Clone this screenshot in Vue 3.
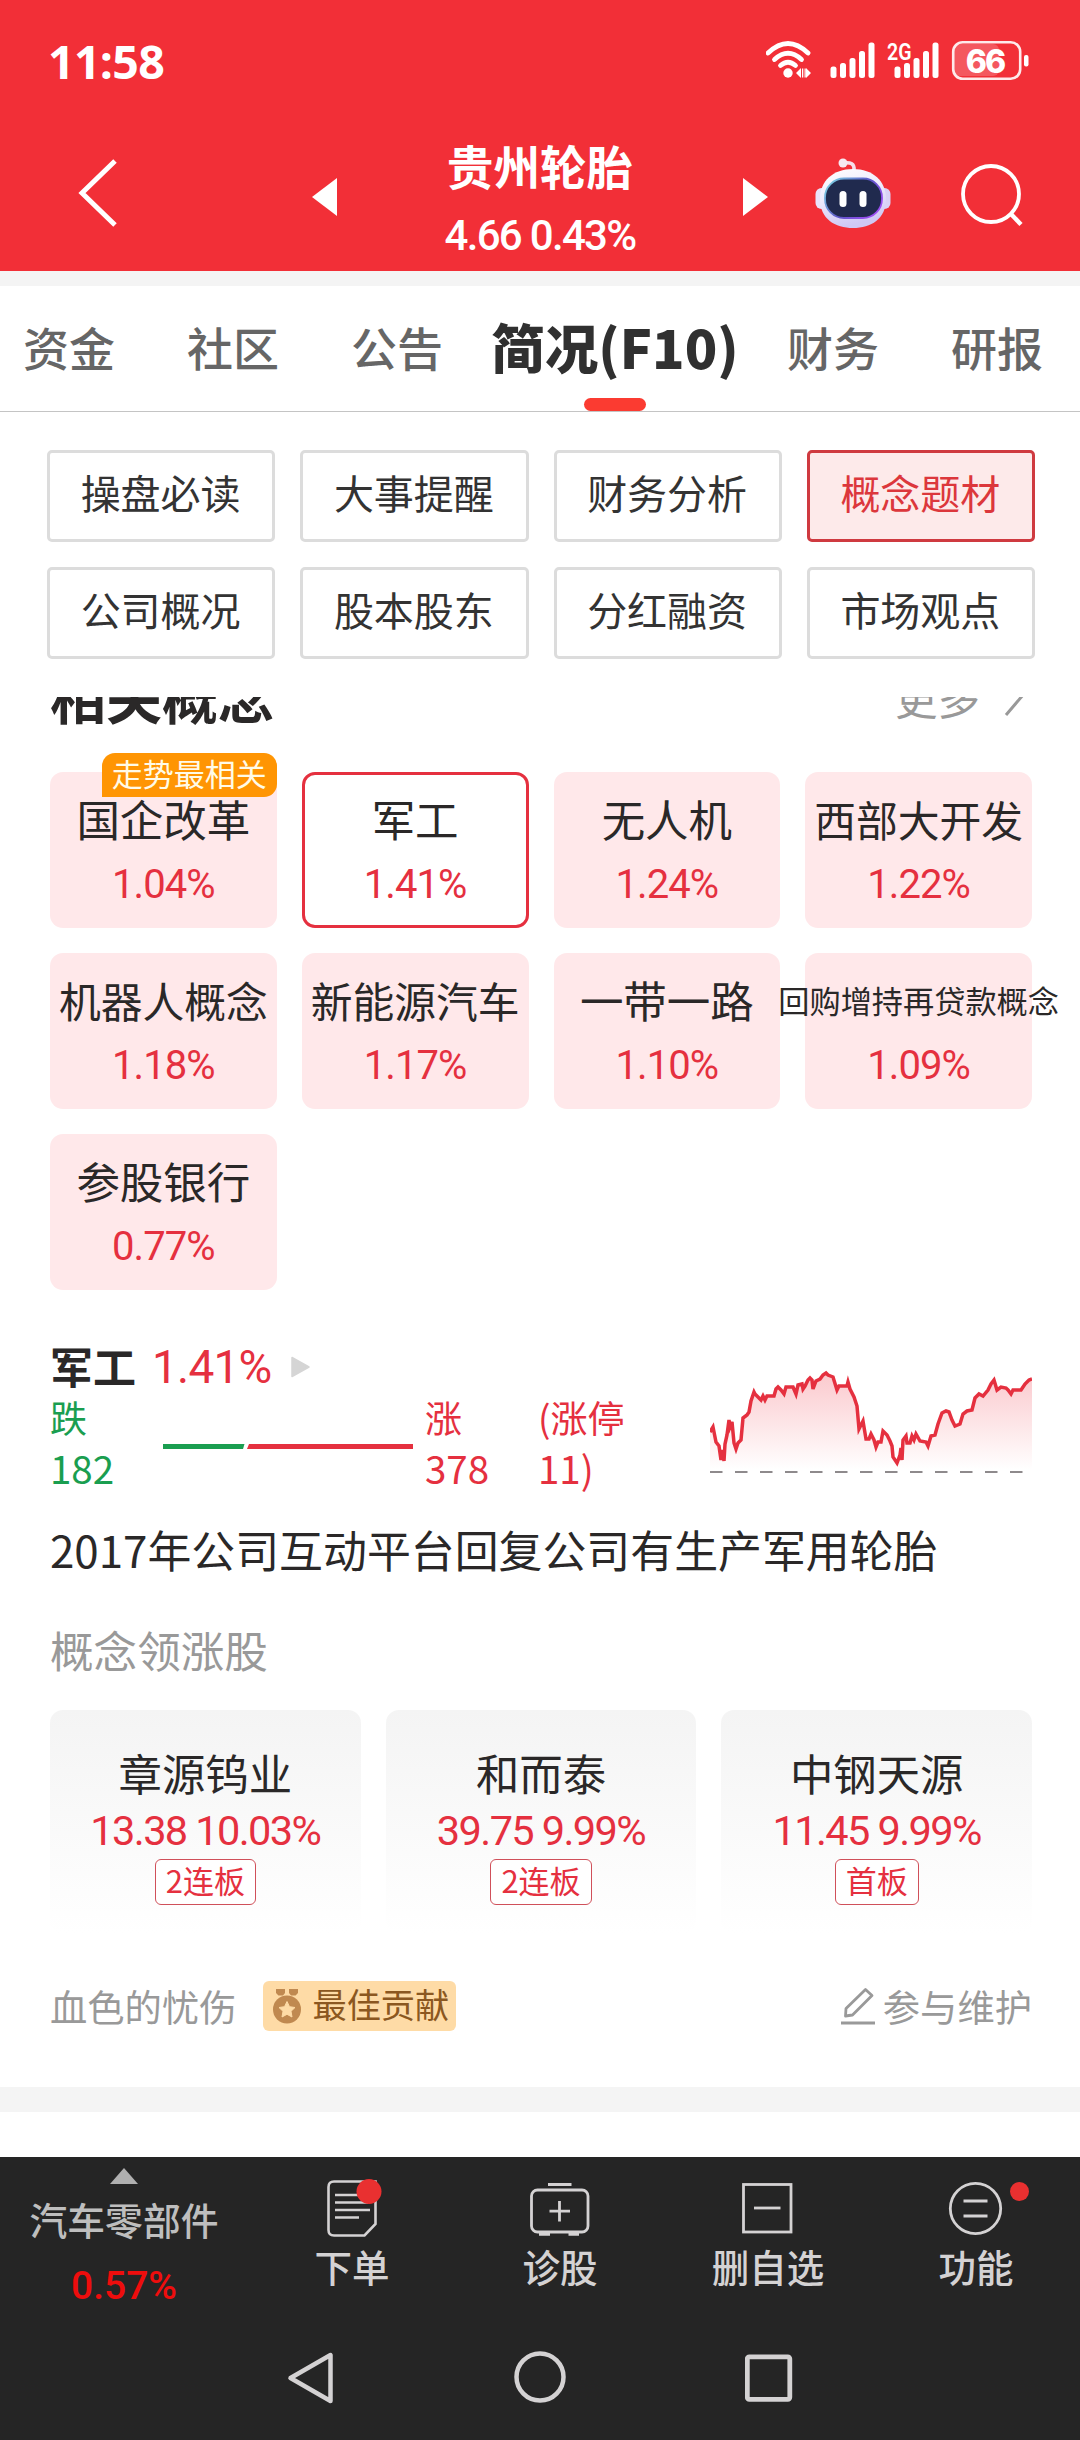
<template>
  <div class="screen">
    <header class="top">
      <div class="status-bar">
        <span class="clock">11:58</span>
        <svg class="status-icons" width="264" height="42" viewBox="0 0 264 42">
          <g fill="none" stroke="#fff" stroke-width="4.8" stroke-linecap="round">
            <path d="M2 13 Q22 -6 42 13" />
            <path d="M8.500 19.500 Q22 7 35.500 19.500" />
            <path d="M14.500 25.500 Q22 19 29.500 25.500" />
          </g>
          <circle cx="22" cy="33" r="4.700" fill="#fff" />
          <path d="M30 33l5-5v10zM45 33l-5-5v10zM36 28.500h1.300v9H36zM38.500 28.500h1.300v9h-1.300z" fill="#fff" />
          <g fill="#fff">
            <rect v-for="bar in signalBars" :key="'a' + bar.x" :x="bar.x" :y="38 - bar.h" width="6" :height="bar.h" rx="2.500" />
            <rect v-for="bar in signalBars" :key="'b' + bar.x" :x="bar.x + 64" :y="38 - bar.h" width="6" :height="bar.h" rx="2.500" />
          </g>
          <text class="net-label" x="121" y="19.500" textLength="24.500" lengthAdjust="spacingAndGlyphs">2G</text>
          <rect x="188" y="4" width="45" height="32" rx="6" fill="#fff" opacity="0.2" />
          <rect x="187.200" y="2.200" width="67" height="36.600" rx="9.500" fill="none" stroke="#fff" stroke-width="2.600" opacity="0.9" />
          <rect x="258" y="15" width="4.500" height="11.500" rx="2" fill="#fff" />
          <text class="battery-label" x="219" y="32.500" text-anchor="middle">66</text>
        </svg>
      </div>

      <div class="title-bar">
        <div class="back">
          <svg width="46" height="76" viewBox="0 0 46 76">
            <path d="M40 6 L7 38 L40 70" fill="none" stroke="#fff" stroke-width="5" />
          </svg>
        </div>
        <svg class="prev" width="25" height="38" viewBox="0 0 25 38"><path d="M25 0V38L0 19z" fill="#fff" /></svg>
        <div class="stock">
          <div class="stock-name">贵州轮胎</div>
          <div class="stock-price">4.66 0.43%</div>
        </div>
        <svg class="next" width="25" height="38" viewBox="0 0 25 38"><path d="M0 0V38L25 19z" fill="#fff" /></svg>
        <svg class="robot" width="76" height="72" viewBox="0 0 76 72">
          <defs>
            <linearGradient id="shell" x1="0" y1="0" x2="0.300" y2="1">
              <stop offset="0" stop-color="#fff" />
              <stop offset="0.500" stop-color="#eeeafc" />
              <stop offset="1" stop-color="#cfc8f4" />
            </linearGradient>
            <linearGradient id="rim" x1="0" y1="0" x2="1" y2="0.600">
              <stop offset="0" stop-color="#7fe0e6" />
              <stop offset="0.600" stop-color="#5d55c8" />
              <stop offset="1" stop-color="#9a4df0" />
            </linearGradient>
          </defs>
          <path d="M28 6 Q40 4 39 13" fill="none" stroke="#f6dfe9" stroke-width="3.500" />
          <circle cx="28" cy="6" r="4.500" fill="#f6e8f0" />
          <rect x="0.500" y="31" width="12" height="21" rx="6" fill="#e9e3fa" />
          <rect x="63.500" y="31" width="12" height="21" rx="6" fill="#d9d2f6" />
          <path d="M38 12 C58 12 71 24 71 42 C71 62 56 71 38 71 C20 71 5 62 5 42 C5 24 18 12 38 12z" fill="url(#shell)" />
          <rect x="10" y="21.500" width="57" height="39.500" rx="19" fill="#202a4e" stroke="url(#rim)" stroke-width="1.800" />
          <rect x="24.500" y="34" width="7" height="16" rx="3.500" fill="#fff" />
          <rect x="44.500" y="34" width="7" height="16" rx="3.500" fill="#fff" />
        </svg>
        <svg class="search" width="64" height="64" viewBox="0 0 64 64">
          <circle cx="31" cy="31" r="28" fill="none" stroke="#fff" stroke-width="3.800" />
          <path d="M50 50 L61 61.500" stroke="#fff" stroke-width="4.400" />
        </svg>
      </div>
    </header>

    <div class="divider-top"></div>

    <nav class="tabs">
      <div v-for="tab in tabs" :key="tab" class="tab" :class="{ active: tab === activeTab }">
        <span>{{ tab }}</span>
      </div>
    </nav>

    <section class="sub-tabs">
      <button v-for="item in subTabs" :key="item" class="sub-tab" :class="{ active: item === activeSub }" @click="activeSub = item">
        {{ item }}
      </button>
    </section>

    <main class="content">
      <div class="section-head">
        <h2>相关概念</h2>
        <div class="more">
          更多
          <svg width="22" height="44" viewBox="0 0 22 44">
            <path d="M2 3 L19 21 L2 41" fill="none" stroke="#999" stroke-width="3" />
          </svg>
        </div>
      </div>

      <div class="concepts">
        <div
          v-for="concept in concepts"
          :key="concept.name"
          class="concept"
          :class="{ selected: concept.name === selected, mid: concept.name.length === 5, long: concept.name.length > 5 }"
          @click="selected = concept.name"
        >
          <span v-if="concept.badge" class="concept-badge">{{ concept.badge }}</span>
          <div class="concept-name">{{ concept.name }}</div>
          <div class="concept-rate">{{ concept.rate }}</div>
        </div>
      </div>

      <div class="detail">
        <div class="detail-info">
          <div class="detail-title">
            <strong>军工</strong>
            <span class="detail-rate">1.41%</span>
            <svg width="19" height="22" viewBox="0 0 19 22"><path d="M1 1.500V20.500L18 11z" fill="#d5d5d5" stroke="#d5d5d5" stroke-width="1.500" stroke-linejoin="round" /></svg>
          </div>
          <div class="breadth">
            <div class="fall">跌<br /><span class="count">182</span></div>
            <svg class="ratio" width="250" height="5" viewBox="0 0 250 5">
              <path d="M0 0H81.500L80 5H0z" fill="#1a9e50" />
              <path d="M86 0H250V5H84z" fill="#e5303f" />
            </svg>
            <div class="rise">涨<br /><span class="count">378</span></div>
            <div class="limit">(涨停<br /><span class="count">11)</span></div>
          </div>
        </div>
        <svg class="trend" width="322" height="110" viewBox="0 0 322 110">
          <defs>
            <linearGradient id="trendFill" x1="0" y1="0" x2="0" y2="1">
              <stop offset="0" stop-color="#fbc9cd" />
              <stop offset="1" stop-color="#fff" />
            </linearGradient>
          </defs>
          <polygon :points="trendArea" fill="url(#trendFill)" />
          <polyline :points="trend" fill="none" stroke="#e5303f" stroke-width="3.500" />
          <path d="M0 102H322" stroke="#8e8a8c" stroke-width="2" stroke-dasharray="12.500 12.500" />
        </svg>
      </div>

      <p class="reason">2017年公司互动平台回复公司有生产军用轮胎</p>

      <h3 class="leaders-title">概念领涨股</h3>
      <div class="leaders">
        <div v-for="stock in leaders" :key="stock.name" class="leader">
          <div class="leader-name">{{ stock.name }}</div>
          <div class="leader-price">{{ stock.price }} {{ stock.rate }}</div>
          <span class="leader-tag">{{ stock.tag }}</span>
        </div>
      </div>

      <div class="credit">
        <span class="author">血色的忧伤</span>
        <span class="medal">
          <svg width="28" height="36" viewBox="0 0 28 36">
            <path d="M3 1H12V5L10 7.500H5.500L3 5zM16 1H25V5L22.500 7.500H18L16 5z" fill="#c08950" />
            <circle cx="14" cy="21.500" r="14" fill="#c08950" />
            <path d="M14 13.500L16.500 18.700L22 19.500L18 23.300L19 29L14 26.300L9 29L10 23.300L6 19.500L11.500 18.700z" fill="#fedba6" stroke="#fedba6" stroke-linejoin="round" />
          </svg>
          <span class="medal-text">最佳贡献</span>
        </span>
        <span class="maintain">
          <svg width="34" height="38" viewBox="0 0 34 38">
            <path d="M4.500 29L5 21.500L24.500 2.500L31 8.500L11.500 28z" fill="none" stroke="#999" stroke-width="2.800" stroke-linejoin="round" />
            <path d="M0 36H34" stroke="#999" stroke-width="3" />
          </svg>
          参与维护
        </span>
      </div>
    </main>

    <div class="divider-bottom"></div>

    <footer class="bottom">
      <div class="toolbar">
        <div class="industry">
          <svg width="28" height="16" viewBox="0 0 28 16"><path d="M14 0L28 16H0z" fill="#b0b0b0" /></svg>
          <div class="industry-name">汽车零部件</div>
          <div class="industry-rate">0.57%</div>
        </div>
        <div class="tool">
          <svg width="60" height="60" viewBox="0 0 60 60">
            <g fill="none" stroke="#d4d2d3" stroke-width="2.600">
              <path d="M12 3.500H53.500V46L42.500 57.500H12Q6.500 57.500 6.500 52V9Q6.500 3.500 12 3.500z" />
              <path d="M13 17H46M13 24.500H46M13 32H48M13 39.500H37" />
            </g>
            <circle cx="47" cy="13.500" r="12.500" fill="#e93030" />
          </svg>
          <span>下单</span>
        </div>
        <div class="tool">
          <svg width="60" height="60" viewBox="0 0 60 60">
            <g fill="none" stroke="#d4d2d3" stroke-width="2.800">
              <rect x="1.500" y="12" width="56.500" height="42" rx="6" />
              <path d="M18 6.500H41.500M29.500 23V43.500M19.500 33.200H40" />
              <path d="M9 56H20M38.500 56H49" stroke-width="3.600" />
            </g>
          </svg>
          <span>诊股</span>
        </div>
        <div class="tool">
          <svg width="60" height="60" viewBox="0 0 60 60">
            <g fill="none" stroke="#d4d2d3" stroke-width="2.800">
              <rect x="5.500" y="6.500" width="47.500" height="47.500" />
              <path d="M16 30H42.500" />
            </g>
          </svg>
          <span>删自选</span>
        </div>
        <div class="tool">
          <svg width="60" height="60" viewBox="0 0 60 60">
            <g fill="none" stroke="#d4d2d3" stroke-width="2.800">
              <circle cx="29.500" cy="30.500" r="25.200" />
              <path d="M17.500 23H41.500M17.500 38H41.500" />
            </g>
          </svg>
          <i class="dot"></i>
          <span>功能</span>
        </div>
      </div>

      <div class="sys-nav">
        <svg width="48" height="56" viewBox="0 0 48 56"><path d="M43.500 5V51L3.500 28z" fill="none" stroke="#d4d2d3" stroke-width="4.500" stroke-linejoin="round" /></svg>
        <svg width="56" height="56" viewBox="0 0 56 56"><circle cx="28" cy="27" r="23.500" fill="none" stroke="#d4d2d3" stroke-width="4.500" /></svg>
        <svg width="48" height="56" viewBox="0 0 48 56"><rect x="2.300" y="6.800" width="42.500" height="42.500" rx="2" fill="none" stroke="#d4d2d3" stroke-width="4.800" /></svg>
      </div>
    </footer>
  </div>
</template>

<script setup>
import { ref, computed } from 'vue'

const signalBars = [
  { x: 64.5, h: 11.5 },
  { x: 74, h: 15 },
  { x: 83.5, h: 20 },
  { x: 93, h: 27 },
  { x: 102.5, h: 35.5 }
]

const tabs = ['资金', '社区', '公告', '简况(F10)', '财务', '研报']
const activeTab = ref('简况(F10)')

const subTabs = ['操盘必读', '大事提醒', '财务分析', '概念题材', '公司概况', '股本股东', '分红融资', '市场观点']
const activeSub = ref('概念题材')

const concepts = [
  { name: '国企改革', rate: '1.04%', badge: '走势最相关' },
  { name: '军工', rate: '1.41%' },
  { name: '无人机', rate: '1.24%' },
  { name: '西部大开发', rate: '1.22%' },
  { name: '机器人概念', rate: '1.18%' },
  { name: '新能源汽车', rate: '1.17%' },
  { name: '一带一路', rate: '1.10%' },
  { name: '回购增持再贷款概念', rate: '1.09%' },
  { name: '参股银行', rate: '0.77%' }
]
const selected = ref('军工')

const leaders = [
  { name: '章源钨业', price: '13.38', rate: '10.03%', tag: '2连板' },
  { name: '和而泰', price: '39.75', rate: '9.99%', tag: '2连板' },
  { name: '中钢天源', price: '11.45', rate: '9.99%', tag: '首板' }
]

const trend =
  '0,62 3,57 6,72 9,76 11,90 13,80 14,91 15,74 17,65 19,50 20,57 22,52 24,73 26,79 28,73 31,70 33,48 37,45 39,42 41,31 44,22 45,24 ' +
  '48,27 51,30 53,26 55,30 57,26 64,26 66,19 68,17 71,20 74,24 76,17 83,17 86,24 88,15 92,14 93,19 95,16 98,10 100,8 102,10 103,19 106,11 ' +
  '110,9 113,5 116,3 118,5 123,7 127,20 129,16 137,16 138,12 140,19 144,27 147,36 149,59 153,51 156,69 159,69 161,64 164,70 166,77 168,72 ' +
  '171,72 173,61 177,65 180,71 182,76 183,87 187,93 190,85 191,78 192,90 193,70 196,66 197,73 200,73 202,66 204,70 206,64 210,71 216,72 ' +
  '218,76 221,66 225,65 228,54 232,43 236,41 239,42 242,50 245,56 250,54 253,44 257,41 262,40 265,28 269,24 273,26 278,20 281,14 284,10 ' +
  '287,20 291,17 296,18 298,20 301,24 303,20 311,20 315,14 319,10 322,9'
const trendArea = computed(() => `0,100 ${trend} 322,100`)
</script>

<style>
body {
  background: #fff;
}
</style>

<style scoped>
.screen {
  width: 1080px;
  height: 2440px;
  overflow: hidden;
  display: flex;
  flex-direction: column;
  background: #fff;
  font-family: 'Noto Sans CJK SC', sans-serif;
  color: #2a2828;
}

.screen svg {
  display: block;
  flex-shrink: 0;
}

/* Header */
.top {
  height: 271px;
  flex-shrink: 0;
  background: #f22f37;
  color: #fff;
}

.status-bar {
  height: 122px;
  box-sizing: border-box;
  padding: 0 50px 0 48px;
  display: flex;
  align-items: center;
  justify-content: space-between;
}

.clock {
  font-family: 'Open Sans', sans-serif;
  font-weight: 700;
  font-size: 46.5px;
  letter-spacing: -0.7px;
}

.net-label {
  font: 600 24px Roboto, sans-serif;
  fill: #fff;
}

.battery-label {
  font: 800 32px Inter, sans-serif;
  letter-spacing: -2px;
  fill: #fff;
}

.title-bar {
  height: 149px;
  display: flex;
  align-items: center;
}

.back {
  margin-left: 75px;
  margin-bottom: 7px;
}

.prev {
  margin-left: 191px;
}

.stock {
  width: 406px;
  margin-top: 9px;
  text-align: center;
}

.stock-name {
  font-size: 46.6px;
  font-weight: 700;
  line-height: 66px;
}

.stock-price {
  margin-top: 3px;
  font-family: Roboto, sans-serif;
  font-size: 42px;
  font-weight: 500;
  letter-spacing: -1.7px;
  line-height: 70px;
}

.robot {
  margin-left: 47px;
  margin-bottom: 8px;
}

.search {
  margin-left: 69px;
  margin-bottom: 3px;
}

.divider-top {
  height: 15px;
  flex-shrink: 0;
  background: #f4f4f4;
}

/* Tabs */
.tabs {
  height: 126px;
  flex-shrink: 0;
  box-sizing: border-box;
  padding-left: 23px;
  display: flex;
  gap: 72px;
  border-bottom: 1px solid #c4c4c4;
}

.tab {
  position: relative;
  width: 92px;
  flex-shrink: 0;
  display: flex;
  justify-content: center;
  font-size: 46px;
  line-height: 121px;
  font-weight: 500;
  color: #666;
  white-space: nowrap;
}

.tab.active {
  width: 200px;
  font-size: 53.5px;
  font-weight: 900;
  line-height: 119px;
  color: #303030;
}

.tab.active::after {
  content: '';
  position: absolute;
  bottom: 0;
  left: 69px;
  width: 62px;
  height: 13px;
  border-radius: 7px;
  background: #fb3b31;
}

.sub-tabs {
  flex-shrink: 0;
  box-sizing: border-box;
  height: 285px;
  padding: 38px 45px 0 47px;
  display: grid;
  grid-template-columns: repeat(4, 1fr);
  grid-auto-rows: 92px;
  gap: 25px;
}

.sub-tab {
  padding: 0 1px 8px 0;
  border: 3px solid #dcdcdc;
  border-radius: 5px;
  background: #fff;
  font-family: inherit;
  font-size: 40px;
  line-height: 1;
  color: #333;
}

.sub-tab.active {
  border-color: #cf3a40;
  background: #fdeaea;
  color: #dc373c;
}

/* Content */
.content {
  flex-shrink: 0;
  height: 1390px;
  box-sizing: border-box;
  padding: 0 48px 0 50px;
  overflow: hidden;
}

.section-head {
  height: 75px;
  display: flex;
  justify-content: space-between;
}

.section-head h2 {
  margin: -36px 0 0;
  font-size: 56px;
  line-height: 68px;
  font-weight: 700;
}

.more {
  height: 68px;
  margin-top: -35px;
  margin-right: 6px;
  display: flex;
  align-items: center;
  gap: 24px;
  font-size: 42.5px;
  color: #999;
}

.concepts {
  display: grid;
  grid-template-columns: repeat(4, minmax(0, 1fr));
  grid-auto-rows: 156px;
  gap: 25px;
}

.concept {
  position: relative;
  display: flex;
  flex-direction: column;
  align-items: center;
  box-sizing: border-box;
  padding-top: 14px;
  border-radius: 13px;
  background: #ffe8ea;
}

.concept.selected {
  padding-top: 11px;
  border: 3px solid #e5303f;
  background: #fff;
}

.concept-name {
  font-size: 43.5px;
  line-height: 66px;
  white-space: nowrap;
}

.mid .concept-name {
  font-size: 41.8px;
}

.long .concept-name {
  font-size: 31.2px;
}

.concept-rate {
  font-family: Roboto, sans-serif;
  font-size: 40px;
  line-height: 66px;
  letter-spacing: -0.9px;
  color: #e5303f;
}

.concept-badge {
  position: absolute;
  top: -19px;
  right: 0;
  width: 175px;
  height: 44px;
  border-radius: 13px 13px 13px 0;
  background: #ff9503;
  color: #fffbe8;
  font-size: 31px;
  line-height: 39px;
  text-align: center;
}

/* Detail */
.detail {
  display: flex;
  justify-content: space-between;
  height: 154px;
  margin-top: 45px;
}

.detail-title {
  display: flex;
  align-items: center;
  height: 64px;
  font-size: 43px;
}

.detail-title strong {
  margin-top: -4px;
  font-weight: 700;
}

.detail-rate {
  margin: 0 20px 0 16px;
  font-family: Roboto, sans-serif;
  font-size: 46px;
  letter-spacing: -0.8px;
  color: #e5303f;
}

.breadth {
  display: flex;
  align-items: center;
  height: 100px;
  margin-top: -7px;
  font-size: 37px;
  line-height: 50px;
}

.count {
  font-size: 38.5px;
}

.fall {
  width: 113px;
  color: #1a9e50;
}

.rise {
  width: 113px;
  margin-left: 12px;
  color: #e5303f;
}

.limit {
  color: #e5303f;
}

.ratio {
  margin-top: 9px;
}

.trend {
  margin-top: 35px;
}

.reason {
  margin: 25px 0 0;
  font-size: 43.9px;
  line-height: 70px;
  white-space: nowrap;
}

.leaders-title {
  margin: 30px 0 0;
  font-size: 43.6px;
  font-weight: 400;
  line-height: 70px;
  color: #999;
}

.leaders {
  display: grid;
  grid-template-columns: repeat(3, 1fr);
  gap: 25px;
  margin-top: 26px;
}

.leader {
  height: 224px;
  box-sizing: border-box;
  padding-top: 32px;
  border-radius: 13px;
  background: linear-gradient(#f4f4f4, #fff);
  text-align: center;
}

.leader-name {
  font-size: 43.4px;
  line-height: 60px;
}

.leader-price {
  font-family: Roboto, sans-serif;
  font-size: 41.5px;
  line-height: 57px;
  letter-spacing: -1.6px;
  color: #e5303f;
}

.leader-tag {
  display: inline-block;
  height: 46px;
  box-sizing: border-box;
  padding: 0 10px;
  border: 1.5px solid #d0505a;
  border-radius: 6px;
  background: #fff;
  font-size: 31px;
  line-height: 40px;
  color: #e5303f;
}

.credit {
  display: flex;
  align-items: center;
  height: 50px;
  margin-top: 47px;
  font-size: 37.3px;
  color: #999;
}

.medal {
  display: flex;
  align-items: center;
  gap: 11px;
  height: 50px;
  box-sizing: border-box;
  margin-left: 27px;
  padding: 0 7px 0 10px;
  border-radius: 6px;
  background: #fedba6;
  font-size: 34.2px;
  line-height: 42px;
  color: #8b5720;
}

.medal-text {
  margin-bottom: 6px;
}

.maintain {
  display: flex;
  align-items: center;
  gap: 8px;
  margin-left: auto;
}

.divider-bottom {
  height: 25px;
  flex-shrink: 0;
  background: #f4f4f4;
}

/* Bottom */
.bottom {
  height: 283px;
  margin-top: auto;
  flex-shrink: 0;
  background: #252525;
  color: #d4d2d3;
}

.toolbar {
  height: 157px;
  display: flex;
}

.industry {
  width: 248px;
  padding-top: 11px;
  display: flex;
  flex-direction: column;
  align-items: center;
}

.industry-name {
  margin-top: 8px;
  font-size: 37.8px;
  font-weight: 500;
  line-height: 54px;
  color: #bebebe;
}

.industry-rate {
  margin-top: 13px;
  font-family: Roboto, sans-serif;
  font-size: 39px;
  font-weight: 500;
  line-height: 54px;
  color: #ee0d0d;
}

.tool {
  position: relative;
  flex: 1;
  padding-top: 21px;
  display: flex;
  flex-direction: column;
  align-items: center;
  font-size: 37.5px;
  font-weight: 500;
  line-height: 56px;
}

.dot {
  position: absolute;
  top: 25px;
  left: 138px;
  width: 19px;
  height: 19px;
  border-radius: 50%;
  background: #e93030;
}

.sys-nav {
  height: 128px;
  display: flex;
  justify-content: center;
  align-items: center;
  gap: 177px;
}
</style>
